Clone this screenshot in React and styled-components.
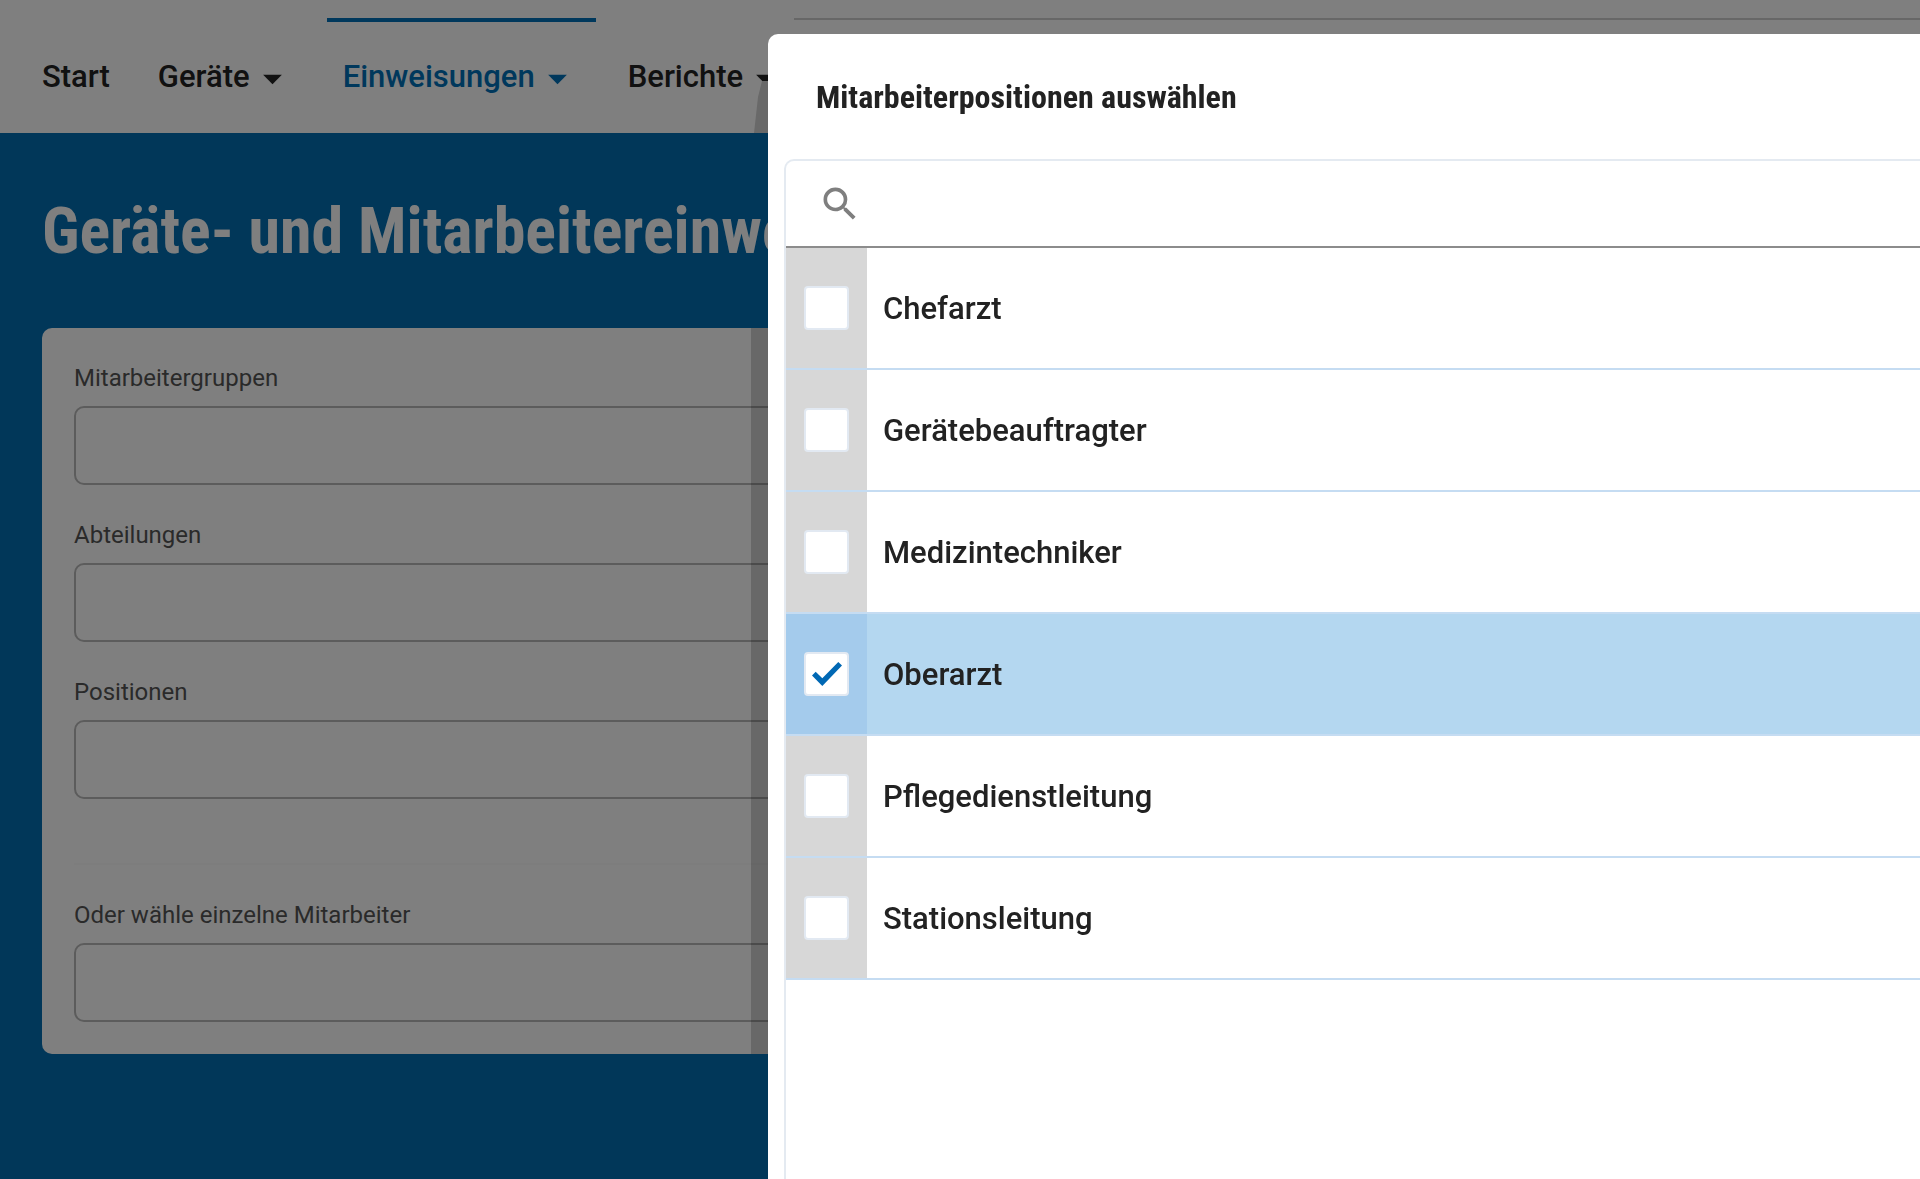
import React, {useState} from 'react';
import styled, {createGlobalStyle} from "styled-components"
import {MdArrowDropDown, MdSearch} from "react-icons/md"

const GlobalStyle = createGlobalStyle`
* {
box-sizing: border-box;
}
body {
margin: 0;
font-family: Roboto, "Liberation Sans", sans-serif;
color: #222222;
background: #026eb2;
}
`;

const navItems = [
  {label: "Start"},
  {label: "Geräte", menu: true},
  {label: "Einweisungen", menu: true, active: true},
  {label: "Berichte", menu: true},
]

const filters = [
  {id: "groups", label: "Mitarbeitergruppen"},
  {id: "departments", label: "Abteilungen"},
  {id: "positions", label: "Positionen"},
]

const positions = [
  "Chefarzt",
  "Gerätebeauftragter",
  "Medizintechniker",
  "Oberarzt",
  "Pflegedienstleitung",
  "Stationsleitung",
]

//Main navigation, the open section has the blue bar on top
const Navigation = () => {
  return (
    <Header>
      <Nav>
        {navItems.map(({label, menu, active}) => (
        <NavLink key={label} href="#" $active={active}>
          {label}
          {menu && <MenuArrow size={45} />}
        </NavLink>
        ))}
      </Nav>
      <HeaderRule />
      <HeaderShade viewBox="0 0 24 52" aria-hidden="true">
        <path d="M8 0H24V52H0L4 16Z" />
      </HeaderShade>
    </Header>
)}

const Field = ({id, label}) => {
  return (
    <FieldGroup>
      <FieldLabel htmlFor={id}>{label}</FieldLabel>
      <FieldInput id={id} type="text" />
    </FieldGroup>
)}

//One selectable position in the dialog
const Option = ({label, checked, onChange}) => {
  return (
    <OptionRow $checked={checked}>
      <OptionLabel>
        <CheckCell $checked={checked}>
          <Checkbox type="checkbox" checked={checked} onChange={onChange} />
          {checked && (
          <CheckMark viewBox="0 0 30 24" aria-hidden="true">
            <path d="M0 13.5L3.7 9.8L10.3 16.2L26.3 0L30 3.6L10.3 24Z" />
          </CheckMark>
          )}
        </CheckCell>
        <OptionText>{label}</OptionText>
      </OptionLabel>
    </OptionRow>
)}

const App = () => {
  const [selected, setSelected] = useState(["Oberarzt"])
  const [query, setQuery] = useState("")

  const toggle = (label) => {
    setSelected(selected.includes(label)
      ? selected.filter((item) => item !== label)
      : [...selected, label])
  }

  const visible = positions.filter((label) =>
    label.toLowerCase().includes(query.toLowerCase()))

  return (
    <>
      <GlobalStyle />
      <Navigation />
      <Main>
        <PageTitle>Geräte- und Mitarbeitereinweisungen</PageTitle>
        <Card>
          {filters.map((filter) => <Field key={filter.id} {...filter} />)}
          <Divider />
          <Field id="employees" label="Oder wähle einzelne Mitarbeiter" />
          <CardShade />
        </Card>
      </Main>
      <Backdrop />
      <Dialog role="dialog" aria-labelledby="dialog-title">
        <DialogTitle id="dialog-title">Mitarbeiterpositionen auswählen</DialogTitle>
        <Panel>
          <SearchBar>
            <MdSearch size={44} />
            <SearchInput
            type="search"
            aria-label="Suche"
            value={query}
            onChange={(e) => setQuery(e.target.value)} />
          </SearchBar>
          <OptionList>
            {visible.map((label) => (
            <Option
            key={label}
            label={label}
            checked={selected.includes(label)}
            onChange={() => toggle(label)} />
            ))}
          </OptionList>
        </Panel>
      </Dialog>
    </>
)}

const Header = styled.header`
position: relative;
height: 133px;
padding: 18px 26px 0;
background: #ffffff;
`;

const Nav = styled.nav`
display: flex;
gap: 16px;
`;

const NavLink = styled.a`
display: flex;
align-items: center;
height: 115px;
padding: 0 16px 2px;
border-top: 4px solid ${({ $active }) => ($active ? "#0070b8" : "transparent")};
color: ${({ $active }) => ($active ? "#0070b8" : "#222222")};
font-size: 31px;
font-weight: 500;
line-height: 40px;
text-decoration: none;
white-space: nowrap;
`;

const MenuArrow = styled(MdArrowDropDown)`
margin-top: 4px;
`;

const HeaderRule = styled.div`
position: absolute;
top: 18px;
left: calc(40% + 26px);
right: 0;
height: 2px;
background: #cfcfcf;
`;

const HeaderShade = styled.svg`
position: absolute;
bottom: 0;
left: calc(40% - 14px);
width: 24px;
height: 52px;
fill: #d2d2d2;
`;

const Main = styled.main`
padding: 56px 42px;
`;

const PageTitle = styled.h1`
margin: 0 0 53px;
color: #ffffff;
font-family: "Roboto Condensed", "Liberation Sans Narrow", Roboto, sans-serif;
font-size: 64px;
font-weight: 700;
line-height: 86px;
white-space: nowrap;
`;

const Card = styled.section`
position: relative;
padding: 32px;
border-radius: 10px;
background: #ffffff;
`;

const CardShade = styled.div`
position: absolute;
top: 0;
bottom: 0;
left: calc(40vw - 59px);
width: 40px;
background: rgba(0, 0, 0, 0.18);
`;

const FieldGroup = styled.div`
display: flex;
flex-direction: column;
gap: 10px;
& + & {
margin-top: 32px;
}
`;

const FieldLabel = styled.label`
color: #555555;
font-size: 24px;
line-height: 36px;
`;

const FieldInput = styled.input`
width: 100%;
height: 79px;
padding: 0 16px;
border: 2px solid #b8b8b8;
border-radius: 10px;
background: transparent;
font: inherit;
font-size: 24px;
`;

const Divider = styled.hr`
height: 2px;
margin: 64px 0 32px;
border: 0;
background: #fafafa;
`;

const Backdrop = styled.div`
position: fixed;
inset: 0;
background: rgba(0, 0, 0, 0.5);
`;

const Dialog = styled.div`
position: fixed;
top: 34px;
right: 0;
bottom: 0;
left: 40%;
display: flex;
flex-direction: column;
padding-left: 16px;
border-top-left-radius: 10px;
background: #ffffff;
overflow: hidden;
`;

const DialogTitle = styled.h2`
margin: 0;
padding: 43px 32px 42px;
font-family: "Roboto Condensed", "Liberation Sans Narrow", Roboto, sans-serif;
font-size: 32px;
font-weight: 700;
line-height: 40px;
`;

const Panel = styled.div`
flex: 1;
border: 2px solid #e4eaf1;
border-width: 2px 0 0 2px;
border-top-left-radius: 10px;
`;

const SearchBar = styled.div`
display: flex;
align-items: center;
gap: 16px;
height: 87px;
padding: 0 32px;
border-bottom: 2px solid #8c8c8c;
color: #7f7f7f;
`;

const SearchInput = styled.input`
flex: 1;
height: 60px;
border: 0;
outline: 0;
background: transparent;
color: #222222;
font: inherit;
font-size: 31px;
`;

const OptionList = styled.ul`
margin: 0;
padding: 0;
list-style: none;
`;

const OptionRow = styled.li`
border-bottom: 2px solid #c5dcf2;
background: ${({ $checked }) => ($checked ? "#b4d7f0" : "#ffffff")};
`;

const OptionLabel = styled.label`
display: flex;
height: 120px;
cursor: pointer;
`;

const CheckCell = styled.span`
display: grid;
place-items: center;
width: 81px;
background: ${({ $checked }) => ($checked ? "#a4cbec" : "#d7d7d7")};
`;

const Checkbox = styled.input`
grid-area: 1 / 1;
appearance: none;
width: 45px;
height: 44px;
margin: 0;
border: 2px solid #e2e9f2;
border-radius: 4px;
background: #ffffff;
cursor: pointer;
`;

const CheckMark = styled.svg`
grid-area: 1 / 1;
width: 30px;
height: 24px;
fill: #0068b4;
pointer-events: none;
`;

const OptionText = styled.span`
display: flex;
align-items: center;
padding: 2px 16px 0;
font-size: 31px;
font-weight: 500;
line-height: 40px;
`;

export default App
